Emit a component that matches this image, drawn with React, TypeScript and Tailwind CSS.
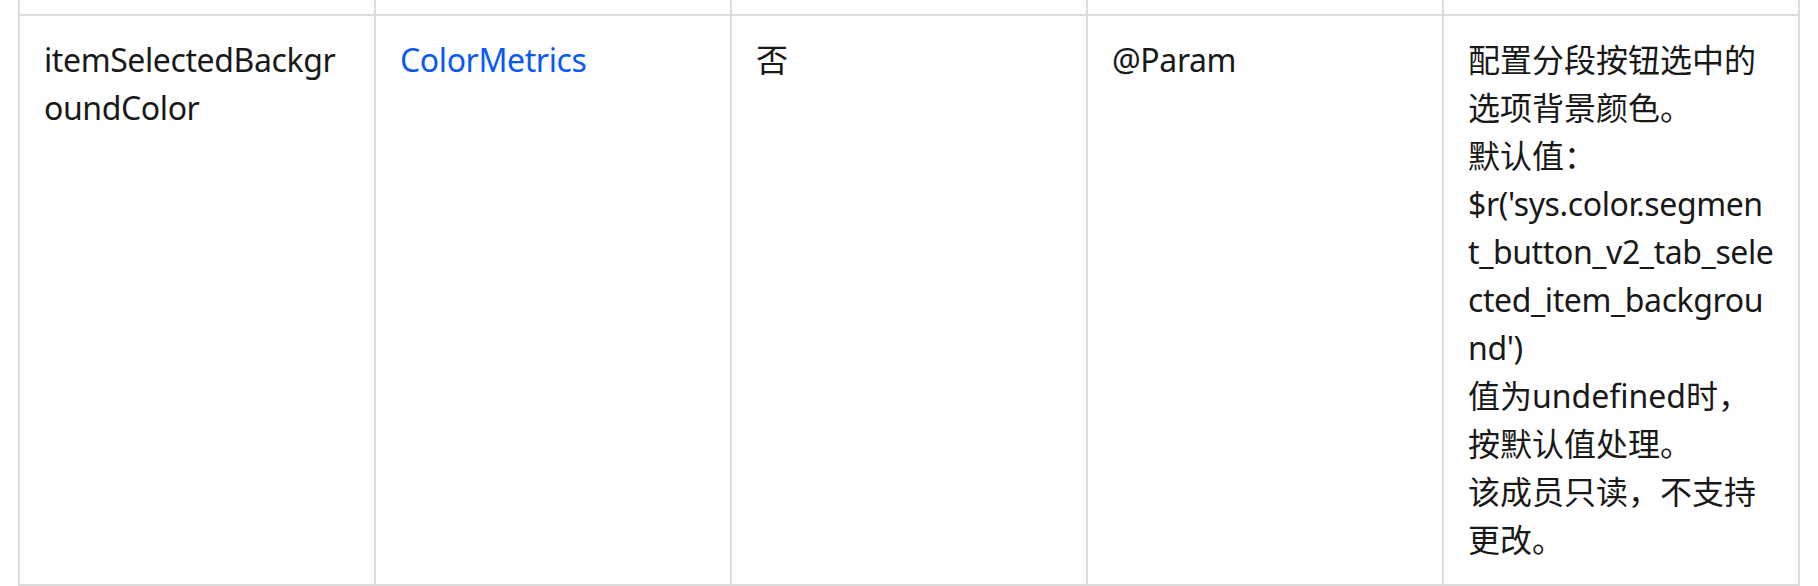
import React from "react";

const font = {
  fontFamily: '"Noto Sans", "Noto Sans CJK SC", sans-serif',
};

const isLatin = (s: string) => !/[\u3000-\u9fff\uff00-\uffef]/.test(s);

function Lines({ lines }: { lines: string[] }) {
  return (
    <div>
      {lines.map((l, i) => (
        <div key={i} className={isLatin(l) ? "whitespace-nowrap tracking-[-0.4px]" : "whitespace-nowrap"}>
          {l}
        </div>
      ))}
    </div>
  );
}

export default function App() {
  const cols = "grid grid-cols-[356px_356px_356px_356px_358px]";
  const cell = "border-l-2 border-[#dcdcdc] px-[24px] py-[20px]";
  return (
    <div className="w-[1818px] h-[586px] bg-white overflow-hidden" style={font}>
      <div className="ml-[18px] w-[1782px]">
        <div className={cols}>
          <div className="h-[14px] border-l-2 border-[#dcdcdc]" />
          <div className="h-[14px] border-l-2 border-[#dcdcdc]" />
          <div className="h-[14px] border-l-2 border-[#dcdcdc]" />
          <div className="h-[14px] border-l-2 border-[#dcdcdc]" />
          <div className="h-[14px] border-l-2 border-r-2 border-[#dcdcdc]" />
        </div>
        <div className={`${cols} border-t-2 border-b-2 border-[#dcdcdc] text-[32px] leading-[48px] text-[#191919]`}>
          <div className={cell}>
            <Lines lines={["itemSelectedBackgr", "oundColor"]} />
          </div>
          <div className={cell}>
            <span className="text-[#0a59f7] tracking-[-0.4px]">ColorMetrics</span>
          </div>
          <div className={cell}>否</div>
          <div className={`${cell} tracking-[-0.4px]`}>@Param</div>
          <div className={`${cell} border-r-2`}>
            <Lines
              lines={[
                "配置分段按钮选中的",
                "选项背景颜色。",
                "默认值：",
                "$r('sys.color.segmen",
                "t_button_v2_tab_sele",
                "cted_item_backgrou",
                "nd')",
                "值为undefined时，",
                "按默认值处理。",
                "该成员只读，不支持",
                "更改。",
              ]}
            />
          </div>
        </div>
      </div>
    </div>
  );
}
